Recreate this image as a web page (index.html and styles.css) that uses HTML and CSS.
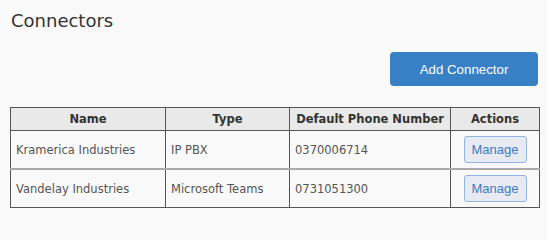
FILE: index.html
```html
<!DOCTYPE html>
<html>
<head>
<meta charset="utf-8">
<link rel="stylesheet" href="styles.css">
</head>
<body>
<div class="page">
  <h1 class="title">Connectors</h1>
  <div class="toolbar">
    <button class="btn-primary">Add Connector</button>
  </div>
  <table class="grid">
    <colgroup>
      <col class="c-name"><col class="c-type"><col class="c-phone"><col class="c-actions">
    </colgroup>
    <thead>
      <tr><th>Name</th><th>Type</th><th>Default Phone Number</th><th>Actions</th></tr>
    </thead>
    <tbody>
      <tr><td>Kramerica Industries</td><td>IP PBX</td><td>0370006714</td><td class="act"><button class="btn-manage">Manage</button></td></tr>
      <tr><td>Vandelay Industries</td><td>Microsoft Teams</td><td>0731051300</td><td class="act"><button class="btn-manage">Manage</button></td></tr>
    </tbody>
  </table>
</div>
</body>
</html>
```
FILE: styles.css
```css
html, body {
  margin: 0;
  padding: 0;
  background: #f9f9f9;
}
.page {
  padding: 8px 8px 0 10px;
  font-family: "DejaVu Sans", Verdana, sans-serif;
}
.title {
  margin: 0 0 0 0;
  font-size: 18px;
  font-weight: normal;
  color: #333;
  line-height: 26px;
  padding-left: 1px;
}
.toolbar {
  display: flex;
  justify-content: flex-end;
  margin-top: 18px;
  padding-right: 1px;
}
.btn-primary {
  width: 148px;
  height: 34px;
  border: none;
  border-radius: 4px;
  background: #3880c5;
  color: #fff;
  font-family: "Liberation Sans", Arial, sans-serif;
  font-size: 13.3px;
  padding: 0;
}
.grid {
  margin-top: 21px;
  width: 529px;
  border-collapse: collapse;
  table-layout: fixed;
  border: 1px solid #555;
  font-size: 11.5px;
  color: #555;
}
.c-name { width: 155px; }
.c-type { width: 124px; }
.c-phone { width: 161px; }
.c-actions { width: 89px; }
.grid th {
  background: #e9e9e9;
  color: #333;
  font-weight: bold;
  height: 22px;
  padding: 0;
  border: 1px solid #555;
  text-align: center;
}
.grid td {
  height: 37px;
  padding: 0 0 0 5px;
  border-left: 1px solid #555;
  border-right: 1px solid #555;
  border-bottom: 2px solid #aaa;
}
.grid tbody tr:last-child td {
  border-bottom: 1px solid #555;
}
.grid td.act {
  text-align: center;
  padding: 0;
}
.btn-manage {
  width: 63px;
  height: 27px;
  padding: 0;
  border: 1.5px solid #8fb5e2;
  border-radius: 3px;
  background: #e8eaf1;
  color: #3a7cc6;
  font-family: "Liberation Sans", Arial, sans-serif;
  font-size: 13px;
}
```
